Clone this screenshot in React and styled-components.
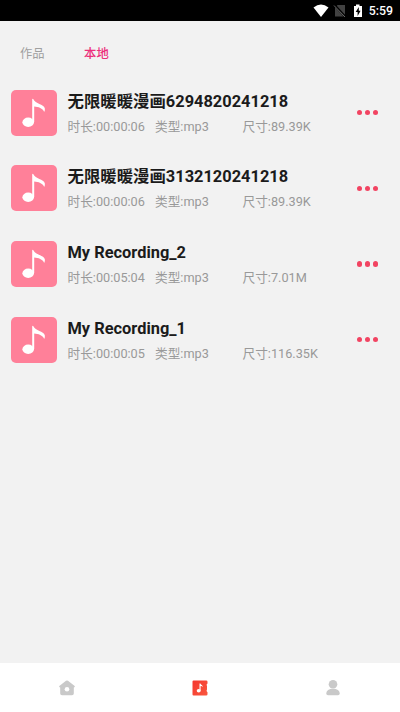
import React from 'react';
import styled, { createGlobalStyle } from 'styled-components';

const GlobalStyle = createGlobalStyle`
  * {
    box-sizing: border-box;
  }
  body {
    margin: 0;
    background: #f2f2f2;
    font-family: Roboto, 'Noto Sans CJK SC', sans-serif;
  }
`;

const Screen = styled.div`
  display: flex;
  flex-direction: column;
  height: 712px;
  width: 400px;
  overflow: hidden;
  background: #f2f2f2;
`;

const StatusBar = styled.header`
  display: flex;
  align-items: center;
  justify-content: flex-end;
  height: 21px;
  padding-right: 7px;
  background: #000;
  color: #fff;
  flex-shrink: 0;
`;

const StatusIcons = styled.svg`
  display: block;
  width: 56px;
  height: 21px;
`;

const Clock = styled.span`
  font-size: 12.3px;
  font-weight: 500;
  line-height: 21px;
  padding-top: 2px;
`;

const Tabs = styled.nav`
  display: flex;
  gap: 39.5px;
  height: 54px;
  padding: 23px 20px 0;
  flex-shrink: 0;
`;

const Tab = styled.span`
  color: ${({ $active }) => ($active ? '#ec2f7b' : '#a0a0a0')};
  font-size: 12.3px;
  font-weight: ${({ $active }) => ($active ? 500 : 400)};
  line-height: 20px;
`;

const List = styled.main`
  flex: 1;
  padding: 0 22px 0 11px;
`;

const Row = styled.article`
  display: flex;
  align-items: center;
  height: 75.6px;
`;

const Cover = styled.div`
  width: 46px;
  height: 46px;
  border-radius: 5px;
  background: #ff8099;
  flex-shrink: 0;

  svg {
    display: block;
  }
`;

const Info = styled.div`
  flex: 1;
  padding-left: 10.5px;
`;

const Title = styled.h2`
  margin: 0;
  color: #1b1b1b;
  font-size: 16.4px;
  font-weight: 700;
  line-height: 24px;
  white-space: nowrap;
`;

const Meta = styled.div`
  display: grid;
  grid-template-columns: 87.5px 87.5px auto;
  color: #999;
  font-size: 12.7px;
  line-height: 18px;
  padding-top: 4px;
  white-space: nowrap;
`;

const MoreButton = styled.button`
  display: flex;
  gap: 2.6px;
  padding: 0;
  border: 0;
  background: none;
`;

const Dot = styled.span`
  width: 5.3px;
  height: 5.3px;
  border-radius: 50%;
  background: #f24462;
`;

const BottomNav = styled.footer`
  display: grid;
  grid-template-columns: repeat(3, 1fr);
  align-items: center;
  justify-items: center;
  height: 49px;
  background: #fff;
  flex-shrink: 0;
`;

const recordings = [
  { title: '无限暖暖漫画6294820241218', duration: '00:00:06', size: '89.39K' },
  { title: '无限暖暖漫画3132120241218', duration: '00:00:06', size: '89.39K' },
  { title: 'My Recording_2', duration: '00:05:04', size: '7.01M' },
  { title: 'My Recording_1', duration: '00:00:05', size: '116.35K' },
];

const StatusGlyphs = () => (
  <StatusIcons viewBox="0 0 56 21">
    {/* wifi */}
    <path d="M0.5 7.5Q8 1.5 15.5 7.5L8 17Z" fill="#fff" />
    {/* no sim */}
    <path d="M24.5 5H32V16.5H22V8Z" fill="#424242" />
    <path d="M21.5 5L32.5 17" stroke="#000" strokeWidth="2.3" />
    <path d="M21 5.5L32 17" stroke="#686868" strokeWidth="1" />
    {/* battery */}
    <path d="M41 6H43V4.5H46.5V6H49V17H41Z" fill="#fff" />
    <path d="M45.8 7L42.7 12H44.6V16L47.6 10.7H45.8Z" fill="#000" />
  </StatusIcons>
);

const NoteIcon = () => (
  <svg width="46" height="46" viewBox="0 0 46 46">
    <ellipse cx="17.2" cy="32.2" rx="5.8" ry="4.7" fill="#fff" />
    <path
      d="M21.2 32V9.5Q21.2 8.3 22.4 9.2C24.2 13.8 32.7 14 33.8 18.2Q34.2 20.3 33.2 22C31.6 18.3 27.5 16.9 23.2 16.6V32Z"
      fill="#fff"
    />
  </svg>
);

const HomeIcon = () => (
  <svg width="18" height="18" viewBox="0 0 18 18">
    <path
      d="M8 1.8Q9 1 10 1.8L16.7 7.1Q17.4 8.5 15.8 8.6V14.5Q15.8 16.3 14 16.3H4Q2.2 16.3 2.2 14.5V8.6Q.6 8.5 1.3 7.1Z"
      fill="#c9c9c9"
    />
    <circle cx="9" cy="10.2" r="2.3" fill="#fff" />
  </svg>
);

const MusicIcon = () => (
  <svg width="18" height="18" viewBox="0 0 18 18">
    <defs>
      <linearGradient id="music-fill" x1="0" y1="0" x2="1" y2="1">
        <stop offset="0" stopColor="#f4372f" />
        <stop offset="1" stopColor="#fa583e" />
      </linearGradient>
    </defs>
    <path
      d="M2.6 1.5H15.2Q16.5 1.5 16.5 2.8V4.4Q14.8 5.4 16 7V10.5Q14.8 12 16.5 13.2V15.2Q16.5 16.5 15.2 16.5H2.6Q1.5 16.5 1.5 15.4V2.6Q1.5 1.5 2.6 1.5Z"
      fill="url(#music-fill)"
    />
    <ellipse cx="7.7" cy="11.7" rx="2" ry="1.7" fill="#fff" />
    <path d="M8.5 11.8V4.6H9.4C9.8 6.1 12 6.2 11.9 8.2C11.2 7.4 10.4 7.2 9.6 7.1V11.8Z" fill="#fff" />
  </svg>
);

const ProfileIcon = () => (
  <svg width="18" height="18" viewBox="0 0 18 18">
    <circle cx="9" cy="5.3" r="4.3" fill="#c9c9c9" />
    <path d="M2.3 14.6C2.3 11.5 5 9.8 9 9.8S15.7 11.5 15.7 14.6Q15.7 16.3 14 16.3H4Q2.3 16.3 2.3 14.6Z" fill="#c9c9c9" />
  </svg>
);

const RecordingRow = ({ title, duration, size }) => {
  return (
    <Row>
      <Cover>
        <NoteIcon />
      </Cover>
      <Info>
        <Title>{title}</Title>
        <Meta>
          <span>时长:{duration}</span>
          <span>类型:mp3</span>
          <span>尺寸:{size}</span>
        </Meta>
      </Info>
      <MoreButton aria-label="More">
        <Dot />
        <Dot />
        <Dot />
      </MoreButton>
    </Row>
  );
};

const App = () => {
  return (
    <>
      <GlobalStyle />
      <Screen>
        <StatusBar>
          <StatusGlyphs />
          <Clock>5:59</Clock>
        </StatusBar>
        <Tabs>
          <Tab>作品</Tab>
          <Tab $active>本地</Tab>
        </Tabs>
        <List>
          {recordings.map((recording) => (
            <RecordingRow key={recording.title} {...recording} />
          ))}
        </List>
        <BottomNav>
          <HomeIcon />
          <MusicIcon />
          <ProfileIcon />
        </BottomNav>
      </Screen>
    </>
  );
};

export default App;
